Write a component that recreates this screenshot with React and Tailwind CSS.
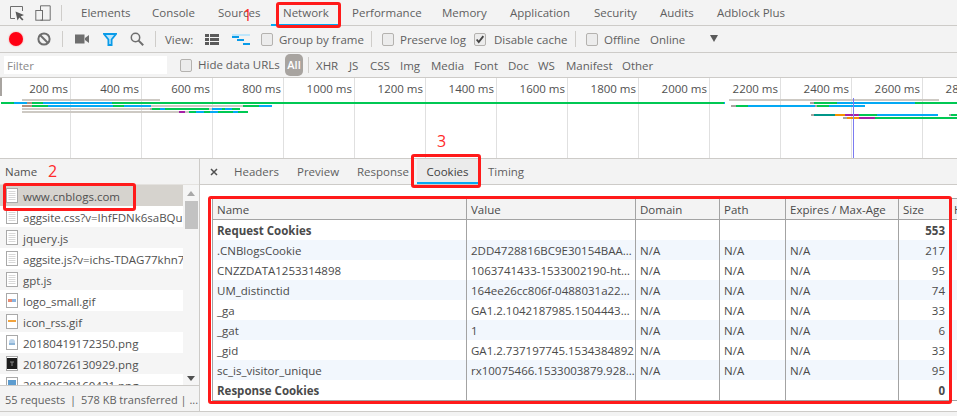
const font = { fontFamily: '"Open Sans", "Noto Sans", sans-serif' };

const tabs = [
  ['Elements', 71], ['Console', 66], ['Sources', 65], ['Network', 69], ['Performance', 90],
  ['Memory', 68], ['Application', 84], ['Security', 66], ['Audits', 57], ['Adblock Plus', 90],
];
const filters = [['XHR', 33], ['JS', 21], ['CSS', 30], ['Img', 31], ['Media', 43], ['Font', 34], ['Doc', 30], ['WS', 28], ['Manifest', 56], ['Other', 40]];
const ticks = [200, 400, 600, 800, 1000, 1200, 1400, 1600, 1800, 2000, 2200, 2400, 2600, 2800];

const G = '#00c853', B = '#03a9f4', K = '#cdc9c3', P = '#a61fa6', O = '#f59300', T = '#009688', R = '#b09080', D = '#a8a4a0';
const bars = [
  [99, 22, 160, K], [99, 729, 939, K],
  [102, 1, 14, G], [102, 14, 27, B], [102, 27, 32, R], [102, 32, 43, G], [102, 43, 112, B], [102, 112, 724, G], [102, 724, 725, B],
  [102, 810, 814, D], [102, 814, 837, G], [102, 837, 915, B], [102, 915, 957, G],
  [105, 22, 32, R], [105, 32, 48, G], [105, 48, 113, B], [105, 113, 124, G], [105, 124, 151, B], [105, 151, 243, K], [105, 243, 259, G], [105, 259, 272, B],
  [105, 731, 736, D], [105, 736, 748, G], [105, 748, 815, B], [105, 815, 817, D], [105, 817, 829, G], [105, 829, 865, B],
  [108, 22, 150, K], [108, 150, 152, D], [108, 152, 160, G], [108, 160, 165, B], [108, 165, 177, G], [108, 177, 209, G], [108, 209, 212, K], [108, 212, 222, B], [108, 222, 225, G], [108, 225, 232, B], [108, 232, 240, G],
  [111, 22, 179, K], [111, 179, 185, P], [111, 185, 189, K], [111, 189, 196, G], [111, 196, 204, B], [111, 204, 210, G], [111, 210, 218, B], [111, 218, 225, G], [111, 225, 233, G], [111, 233, 238, B], [111, 238, 248, G],
  [114, 811, 814, D], [114, 814, 835, T], [114, 835, 845, O], [114, 845, 859, P], [114, 859, 877, G], [114, 877, 938, B], [114, 949, 951, D], [114, 951, 957, G],
  [117, 843, 847, D], [117, 847, 859, O], [117, 859, 875, P], [117, 875, 957, G],
];

const files = [
  ['www.cnblogs.com', 'doc'], ['aggsite.css?v=IhfFDNk6saBQu', 'doc'], ['jquery.js', 'doc'], ['aggsite.js?v=ichs-TDAG77khn7', 'doc'], ['gpt.js', 'doc'],
  ['logo_small.gif', 'logo'], ['icon_rss.gif', 'rss'], ['20180419172350.png', 'png'], ['20180726130929.png', 'dark'], ['20180629160421.png', 'blue'],
];

const cols = 'grid-cols-[254px_169px_84px_66px_113px_51px_1fr]';
const rows = [
  ['Request Cookies', '', '', '', '', '553', true],
  ['.CNBlogsCookie', '2DD4728816BC9E30154BAA…', 'N/A', 'N/A', 'N/A', '217'],
  ['CNZZDATA1253314898', '1063741433-1533002190-ht…', 'N/A', 'N/A', 'N/A', '95'],
  ['UM_distinctid', '164ee26cc806f-0488031a22…', 'N/A', 'N/A', 'N/A', '74'],
  ['_ga', 'GA1.2.1042187985.1504443…', 'N/A', 'N/A', 'N/A', '33'],
  ['_gat', '1', 'N/A', 'N/A', 'N/A', '6'],
  ['_gid', 'GA1.2.737197745.1534384892', 'N/A', 'N/A', 'N/A', '33'],
  ['sc_is_visitor_unique', 'rx10075466.1533003879.928…', 'N/A', 'N/A', 'N/A', '95'],
  ['Response Cookies', '', '', '', '', '0', true],
];

function Check({ on }) {
  return (
    <span className="relative block w-[12px] h-[13px] shrink-0 rounded-[2px] border border-[#b4b2af] bg-[#ececec]">
      {on && (
        <svg viewBox="0 0 12 12" className="absolute left-0 top-0 w-[10px] h-[11px]">
          <path d="M2 6 L4.5 9 L10 2" fill="none" stroke="#444" strokeWidth="2.2" />
        </svg>
      )}
    </span>
  );
}

function Sep({ className }) {
  return <span className={`block w-px h-[16px] shrink-0 bg-[#cfcdca] ${className}`} />;
}

function FileIcon({ kind }) {
  return (
    <svg width="12" height="15" viewBox="0 0 12 15" className="shrink-0">
      <rect x="0.5" y="0.5" width="11" height="14" fill="#fff" stroke="#a9a9a9" />
      {kind === 'doc' && <path d="M2.5 3.5h7M2.5 5.5h7M2.5 7.5h7M2.5 9.5h7M2.5 11.5h7" stroke="#d8d8d8" />}
      {kind === 'logo' && <><rect x="2" y="6" width="4" height="3" fill="#e88a70" /><rect x="6" y="6" width="4" height="3" fill="#8ab4e0" /></>}
      {kind === 'rss' && <rect x="2" y="6" width="8" height="2" fill="#f2a33c" />}
      {kind === 'png' && <><circle cx="6" cy="7" r="3" fill="#bcd4ea" /><rect x="3" y="8" width="6" height="2" fill="#8fb6d8" /></>}
      {kind === 'dark' && <><rect x="1" y="2" width="10" height="11" fill="#1c1c1c" /><path d="M4 6h4M6 6v4" stroke="#888" /></>}
      {kind === 'blue' && <rect x="2" y="3" width="8" height="8" fill="#5d9ccf" />}
    </svg>
  );
}

function RedBox({ className }) {
  return <div className={`absolute border-[3px] border-[#ff1a1a] rounded-[3px] pointer-events-none ${className}`} />;
}

export default function App() {
  return (
    <div className="relative w-[957px] h-[416px] overflow-hidden bg-[#f3f3f3] text-[#5f5f5f] text-[11.5px]" style={font}>
      {/* main tab bar */}
      <div className="flex items-center h-[26px] border-b border-[#cdcbc8]">
        <svg width="16" height="16" viewBox="0 0 16 16" className="ml-[9px] shrink-0">
          <path d="M6 13.5H1.5V1.5h12V6" fill="none" stroke="#6e6e6e" />
          <path d="M6.5 6.5 L15 10 L11.6 11.4 L14.5 14.5 L13.2 15.5 L10.3 12.5 L8.5 15.5 Z" fill="#5a5a5a" />
        </svg>
        <svg width="16" height="16" viewBox="0 0 16 16" className="ml-[10px] shrink-0">
          <path d="M5.5 5V0.8h9.7v14.4H5.5" fill="none" stroke="#6e6e6e" />
          <rect x="0.8" y="5.5" width="6.7" height="9.7" fill="none" stroke="#6e6e6e" />
        </svg>
        <Sep className="ml-[10px] mr-[19px]" />
        {tabs.map(([t, w]) => (
          <span key={t} className="shrink-0 leading-[25px] whitespace-nowrap" style={{ width: w }}>{t}</span>
        ))}
      </div>
      <div className="absolute left-[271px] top-[24px] w-[69px] h-[2px] bg-[#03a9f4]" />

      {/* network toolbar */}
      <div className="flex items-center h-[27px] border-b border-[#cdcbc8]">
        <span className="block ml-[9px] w-[14px] h-[14px] rounded-full bg-[#ff0013] shadow-[0_0_2px_#ff8a8a] shrink-0" />
        <svg width="14" height="14" viewBox="0 0 14 14" className="ml-[14px] shrink-0">
          <circle cx="7" cy="7" r="5.6" fill="none" stroke="#6e6e6e" strokeWidth="2" />
          <path d="M3 3L11 11" stroke="#6e6e6e" strokeWidth="2" />
        </svg>
        <Sep className="ml-[11px]" />
        <svg width="14" height="10" viewBox="0 0 14 10" className="ml-[12px] shrink-0">
          <rect x="0" y="0.5" width="9.5" height="9" fill="#6e6e6e" />
          <path d="M10 4L14 1V9L10 6Z" fill="#6e6e6e" />
        </svg>
        <svg width="14" height="13" viewBox="0 0 14 13" className="ml-[14px] shrink-0">
          <path d="M1 1H13L8.6 6.5V12H5.4V6.5Z" fill="#bfe6fb" stroke="#0a9be8" strokeWidth="1.8" />
        </svg>
        <svg width="14" height="14" viewBox="0 0 14 14" className="ml-[13px] shrink-0">
          <circle cx="5.5" cy="5.5" r="4.2" fill="none" stroke="#6e6e6e" strokeWidth="1.5" />
          <path d="M8.6 8.6L13.2 13.2" stroke="#6e6e6e" strokeWidth="2" />
        </svg>
        <Sep className="ml-[11px]" />
        <span className="ml-[9px] w-[40px] shrink-0 pt-[1px]">View:</span>
        <svg width="14" height="11" viewBox="0 0 14 11" className="shrink-0">
          <path d="M0 0h4v3H0zM5 0h9v3H5zM0 4h4v3H0zM5 4h9v3H5zM0 8h4v3H0zM5 8h9v3H5z" fill="#5a5a5a" />
        </svg>
        <svg width="18" height="11" viewBox="0 0 18 11" className="ml-[13px] shrink-0">
          <rect x="0" y="0" width="18" height="2" fill="#bfe6fb" />
          <rect x="0" y="2" width="7" height="2" fill="#0a9be8" />
          <rect x="5" y="5" width="7" height="2" fill="#0a9be8" />
          <rect x="11" y="9" width="7" height="2" fill="#0a9be8" />
        </svg>
        <span className="block ml-[11px]"><Check /></span>
        <span className="ml-[6px] w-[92px] shrink-0 whitespace-nowrap pt-[1px]">Group by frame</span>
        <Sep />
        <span className="block ml-[10px]"><Check /></span>
        <span className="ml-[6px] w-[74px] shrink-0 whitespace-nowrap pt-[1px]">Preserve log</span>
        <Check on />
        <span className="ml-[8px] w-[81px] shrink-0 whitespace-nowrap pt-[1px]">Disable cache</span>
        <Sep />
        <span className="block ml-[10px]"><Check /></span>
        <span className="ml-[6px] w-[46px] shrink-0 whitespace-nowrap pt-[1px]">Offline</span>
        <span className="w-[60px] shrink-0 pt-[1px]">Online</span>
        <svg width="8" height="7" viewBox="0 0 8 7" className="shrink-0 mb-[2px]"><path d="M0 0H8L4 7Z" fill="#5a5a5a" /></svg>
      </div>

      {/* filter bar */}
      <div className="flex items-center h-[25px] border-b border-[#cdcbc8]">
        <div className="ml-[4px] w-[163px] h-[18px] bg-white pl-[3px] leading-[20px] text-[#8a8a8a] shrink-0">Filter</div>
        <span className="block ml-[13px]"><Check /></span>
        <span className="ml-[6px] w-[87px] shrink-0 whitespace-nowrap">Hide data URLs</span>
        <span className="w-[18px] h-[22px] rounded-[5px] bg-[#a8a4a0] text-white text-center leading-[22px] shrink-0 font-semibold text-[11px]">All</span>
        <Sep className="ml-[5px] mr-[7px]" />
        {filters.map(([t, w]) => (
          <span key={t} className="shrink-0 whitespace-nowrap pt-[2px]" style={{ width: w }}>{t}</span>
        ))}
      </div>

      {/* overview timeline */}
      <div className="relative h-[81px] bg-white border-b border-[#cdcbc8] overflow-hidden">
        <div className="flex h-full">
          {ticks.map((t) => (
            <div key={t} className="w-[71px] shrink-0 h-full border-r border-[#e0e0e0] text-right pr-[2px] pt-[2px] leading-[18px] text-[#505050] whitespace-nowrap">
              {t} ms
            </div>
          ))}
        </div>
        <svg width="957" height="80" viewBox="0 78 957 80" className="absolute left-0 top-0">
          <rect x="0" y="78" width="2" height="18" fill="#a8a4a0" />
          {bars.map(([y, a, b, c], i) => (
            <rect key={i} x={a} y={y} width={b - a} height="2" fill={c} />
          ))}
          <rect x="853" y="98" width="1" height="60" fill="#7b7bf0" />
        </svg>
      </div>

      {/* lower split */}
      <div className="flex h-[253px] border-b border-[#cdcbc8]">
        {/* request list */}
        <div className="w-[200px] shrink-0 border-r border-[#cdcbc8] flex flex-col">
          <div className="h-[26px] shrink-0 pl-[5px] leading-[25px] border-b border-[#e4e2df] text-[#505050]">Name</div>
          <div className="h-[200px] shrink-0 flex overflow-hidden">
            <div className="w-[183px] shrink-0 overflow-hidden">
              {files.map(([name, kind], i) => (
                <div
                  key={name}
                  className={`flex items-center gap-[5px] h-[21px] pl-[6px] whitespace-nowrap overflow-hidden text-[#505050] ${i === 0 ? 'bg-[#d6d3ce]' : i % 2 ? 'bg-white' : 'bg-[#f5f5f5]'}`}
                >
                  <FileIcon kind={kind} />
                  <span className="pt-[2px]">{name}</span>
                </div>
              ))}
            </div>
            <div className="w-[16px] shrink-0 bg-[#f5f5f5] flex flex-col items-center">
              <svg width="8" height="5" viewBox="0 0 8 5" className="mt-[6px]"><path d="M0 5L4 0L8 5Z" fill="#a8a8a8" /></svg>
              <div className="w-[13px] h-[28px] bg-[#c2c2c2] mt-[5px]" />
              <svg width="8" height="5" viewBox="0 0 8 5" className="mt-auto mb-[4px]"><path d="M0 0L4 5L8 0Z" fill="#505050" /></svg>
            </div>
          </div>
          <div className="flex-1 border-t border-[#cdcbc8] pl-[5px] leading-[27px] whitespace-nowrap overflow-hidden text-[11px]">
            55 requests <span className="mx-[2px]">|</span> 578 KB transferred <span>| ...</span>
          </div>
        </div>

        {/* detail pane */}
        <div className="flex-1 min-w-0 flex flex-col bg-white">
          <div className="flex items-center h-[26px] shrink-0 bg-[#f3f3f3] border-b border-[#cdcbc8]">
            <svg width="8" height="8" viewBox="0 0 8 8" className="ml-[10px] mr-[16px] shrink-0"><path d="M1 1L7 7M7 1L1 7" stroke="#505050" strokeWidth="1.5" /></svg>
            <span className="w-[63px] shrink-0">Headers</span>
            <span className="w-[60px] shrink-0">Preview</span>
            <span className="w-[60px] shrink-0 whitespace-nowrap">Response</span>
            <span className="relative w-[61px] h-full shrink-0 bg-[#ebebeb] border-b-2 border-[#03a9f4] text-center leading-[25px] text-[#404040]">Cookies</span>
            <span className="ml-[10px]">Timing</span>
          </div>
          <div className="mt-[13px] ml-[12px] border border-[#a3a3a3] border-r-0 text-[11.5px] text-[#4a4a4a]">
            <div className={`grid ${cols} h-[21px] bg-[#f3f3f3] border-b border-[#a3a3a3] leading-[21px]`}>
              {['Name', 'Value', 'Domain', 'Path', 'Expires / Max-Age', 'Size', 'H'].map((h, i) => (
                <div key={h} className={`pl-[4px] whitespace-nowrap overflow-hidden ${i < 6 ? 'border-r border-[#a3a3a3]' : ''}`}>{h}</div>
              ))}
            </div>
            {rows.map((r, i) => (
              <div key={r[0]} className={`grid ${cols} h-[20px] leading-[21px] ${i % 2 ? 'bg-[#f2f7fd]' : 'bg-white'} ${r[6] ? 'font-bold' : ''}`}>
                {r.slice(0, 6).map((c, j) => (
                  <div
                    key={j}
                    className={`border-r border-[#a3a3a3] whitespace-nowrap overflow-hidden ${j === 5 ? 'text-right pr-[4px]' : 'pl-[4px]'}`}
                  >
                    {c}
                  </div>
                ))}
                <div />
              </div>
            ))}
          </div>
        </div>
      </div>

      {/* annotations */}
      <RedBox className="left-[276px] top-[2px] w-[65px] h-[26px]" />
      <RedBox className="left-[3px] top-[183px] w-[133px] h-[28px]" />
      <RedBox className="left-[411px] top-[154px] w-[70px] h-[34px]" />
      <RedBox className="left-[208px] top-[196px] w-[744px] h-[208px]" />
      <span className="absolute left-[243px] top-[5px] text-[16px] leading-[20px] text-[#ff2a2a]">1</span>
      <span className="absolute left-[48px] top-[161px] text-[16px] leading-[20px] text-[#ff2a2a]">2</span>
      <span className="absolute left-[437px] top-[131px] text-[16px] leading-[20px] text-[#ff2a2a]">3</span>
    </div>
  );
}
